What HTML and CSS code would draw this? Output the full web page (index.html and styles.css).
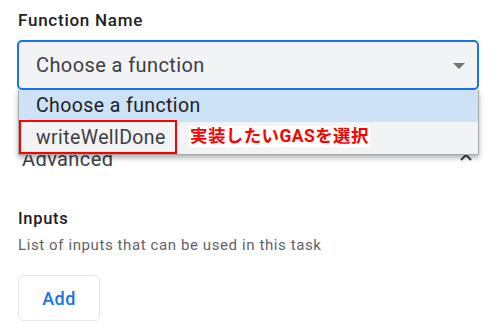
FILE: index.html
```html
<!DOCTYPE html>
<html>
<head>
<meta charset="utf-8">
<link rel="stylesheet" href="styles.css">
</head>
<body>
<div class="page">
  <div class="label">Function Name</div>
  <div class="select-wrap">
    <div class="select">
      <span class="select-text">Choose a function</span>
      <svg class="arrow" width="12" height="6" viewBox="0 0 12 6"><path d="M0 0h12L6 6z" fill="#757575"/></svg>
    </div>
    <div class="dropdown">
      <div class="option selected">Choose a function</div>
      <div class="option">writeWellDone</div>
    </div>
    <div class="hl-box"></div>
    <div class="note">実装したいGASを選択</div>
  </div>
  <div class="advanced">
    <span class="adv-text">Advanced</span>
    <svg class="chev" width="12" height="8" viewBox="0 0 12 8"><path d="M1 7L6 2l5 5" fill="none" stroke="#3c4043" stroke-width="2"/></svg>
  </div>
  <div class="section-title">Inputs</div>
  <div class="desc">List of inputs that can be used in this task</div>
  <button class="add">Add</button>
</div>
</body>
</html>
```
FILE: styles.css
```css
html, body {
  margin: 0;
  padding: 0;
  background: #ffffff;
}
body {
  font-family: Roboto, "Noto Sans CJK JP", sans-serif;
  color: #202124;
}
.page {
  padding: 10px 24px 0 17px;
  display: flex;
  flex-direction: column;
  align-items: flex-start;
}
.label {
  font-size: 17px;
  font-weight: 500;
  line-height: 20px;
  letter-spacing: 0.75px;
  margin-left: 1px;
  color: #202124;
}
.select-wrap {
  position: relative;
  margin-top: 10px;
  align-self: stretch;
}
.select {
  box-sizing: border-box;
  height: 50px;
  border: 2px solid #1a73e8;
  border-radius: 5px;
  background: #f1f3f4;
  display: flex;
  align-items: center;
  justify-content: space-between;
  padding: 0 12px 0 17px;
}
.select-text {
  font-size: 20px;
  letter-spacing: 0.4px;
  color: #3c4043;
}
.arrow {
  margin-top: 2px;
}
.dropdown {
  position: absolute;
  left: 1px;
  right: 0;
  top: 50px;
  border: 1px solid #a8a8a8;
  border-top: none;
  background: #f1f3f4;
  box-shadow: 0 3px 5px rgba(0,0,0,0.3);
  z-index: 2;
}
.option {
  height: 32px;
  line-height: 32px;
  font-size: 19.5px;
  letter-spacing: 0.4px;
  padding-left: 17px;
  color: #3c4043;
}
.option.selected {
  background: #cde1f7;
  color: #202124;
}
.hl-box {
  position: absolute;
  left: 2px;
  top: 80px;
  width: 154px;
  height: 30px;
  border: 2px solid #ff0000;
  z-index: 3;
}
.note {
  position: absolute;
  left: 172px;
  top: 86px;
  height: 21px;
  line-height: 21px;
  padding: 0 1px;
  background: #ffffff;
  color: #ff0000;
  font-weight: 700;
  font-size: 17.5px;
  letter-spacing: 0.4px;
  z-index: 3;
}
.advanced {
  align-self: stretch;
  display: flex;
  justify-content: space-between;
  align-items: center;
  height: 40px;
  margin-top: 49px;
  padding: 0 7px 0 5px;
  box-sizing: border-box;
}
.adv-text {
  font-size: 20px;
  letter-spacing: 0.4px;
  color: #3c4043;
}
.chev {
  margin-top: -4px;
}
.section-title {
  margin-top: 30px;
  margin-left: 1px;
  font-size: 16.5px;
  font-weight: 500;
  line-height: 20px;
  letter-spacing: 0.7px;
  color: #202124;
}
.desc {
  margin-top: 7px;
  margin-left: 1px;
  font-size: 15px;
  line-height: 18px;
  letter-spacing: 0.6px;
  color: #5f6368;
}
.add {
  margin-top: 21px;
  margin-left: 1px;
  width: 82px;
  height: 46px;
  border: 1px solid #e3e5e8;
  border-radius: 5px;
  background: #ffffff;
  color: #1a73e8;
  font-family: Roboto, sans-serif;
  font-size: 18px;
  font-weight: 500;
  letter-spacing: 0.5px;
  padding: 0;
}
```
